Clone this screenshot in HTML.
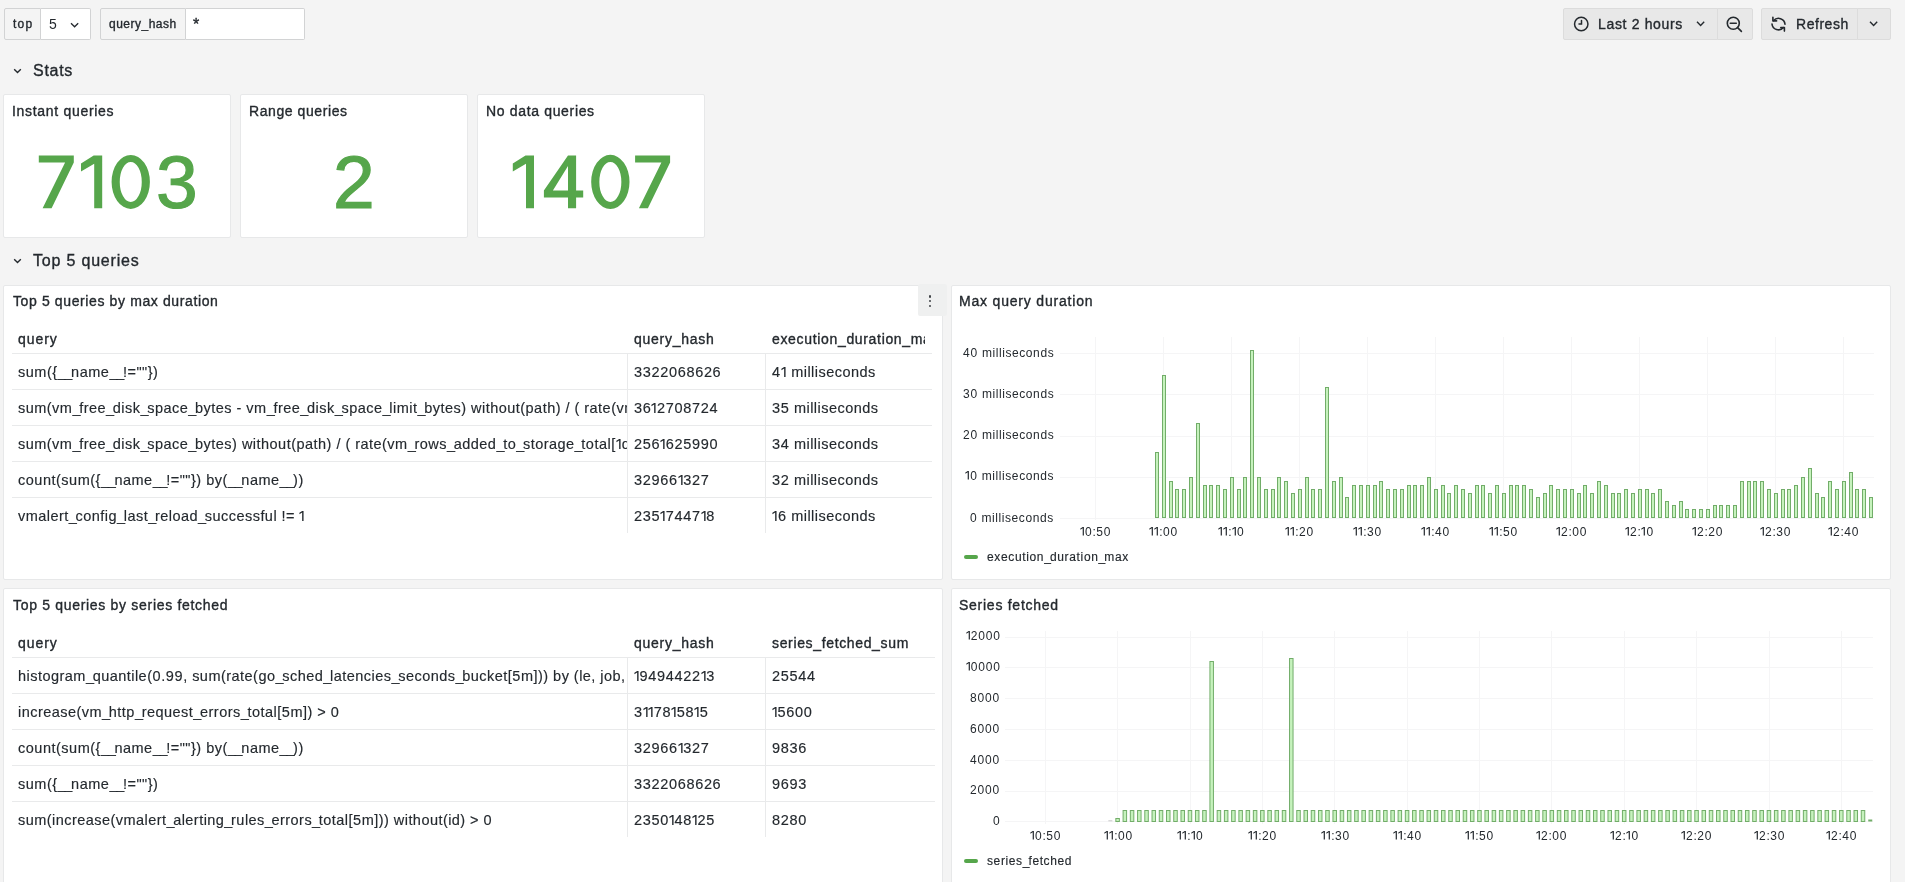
<!DOCTYPE html>
<html><head><meta charset="utf-8"><style>
html,body{margin:0;padding:0;}
body{width:1905px;height:882px;overflow:hidden;background:#f4f4f4;position:relative;font-family:"Liberation Sans",sans-serif;}
.t{position:absolute;white-space:nowrap;line-height:1;will-change:transform;}
.m{-webkit-text-stroke:0.35px currentColor;}
.r{-webkit-text-stroke:0.15px currentColor;}
.big{-webkit-text-stroke:1.2px currentColor;}
</style></head><body>
<div style="position:absolute;left:4px;top:8px;width:37px;height:32px;background:#f4f4f4;border:1px solid #d2d3d4;border-radius:2px 0 0 2px;box-sizing:border-box;"></div>
<div style="position:absolute;left:41px;top:8px;width:50px;height:32px;background:#fff;border:1px solid #d2d3d4;border-left:none;border-radius:0 2px 2px 0;box-sizing:border-box;"></div>
<div class="t m" style="left:12.70px;top:18.04px;font-size:12px;letter-spacing:1.259px;color:#24292e;">top</div>
<div class="t " style="left:49.20px;top:17.35px;font-size:14px;letter-spacing:0.000px;color:#24292e;">5</div>
<svg style="position:absolute;left:70px;top:22px" width="10" height="7"><path d="M1 1.2 L4.6 4.8 L8.2 1.2" fill="none" stroke="#24292e" stroke-width="1.3"/></svg>
<div style="position:absolute;left:100px;top:8px;width:86px;height:32px;background:#f4f4f4;border:1px solid #d2d3d4;border-radius:2px 0 0 2px;box-sizing:border-box;"></div>
<div style="position:absolute;left:186px;top:8px;width:119px;height:32px;background:#fff;border:1px solid #d2d3d4;border-left:none;border-radius:0 2px 2px 0;box-sizing:border-box;"></div>
<div class="t m" style="left:108.80px;top:17.54px;font-size:12px;letter-spacing:0.498px;color:#24292e;">query_hash</div>
<div class="t m" style="left:193.20px;top:17.06px;font-size:16px;letter-spacing:0.000px;color:#24292e;">*</div>
<div style="position:absolute;left:1563px;top:8px;width:155px;height:32px;background:#e8e8e8;border:1px solid #dcdcdc;box-sizing:border-box;border-radius:2px 0 0 2px;"></div>
<div style="position:absolute;left:1717px;top:8px;width:36px;height:32px;background:#e8e8e8;border:1px solid #dcdcdc;box-sizing:border-box;border-radius:0 2px 2px 0;"></div>
<div style="position:absolute;left:1761px;top:8px;width:97px;height:32px;background:#e8e8e8;border:1px solid #dcdcdc;box-sizing:border-box;border-radius:2px 0 0 2px;"></div>
<div style="position:absolute;left:1857px;top:8px;width:34px;height:32px;background:#e8e8e8;border:1px solid #dcdcdc;box-sizing:border-box;border-radius:0 2px 2px 0;"></div>
<svg style="position:absolute;left:1572px;top:15px" width="18" height="18" viewBox="0 0 18 18"><circle cx="9.25" cy="9" r="6.7" fill="none" stroke="#24292e" stroke-width="1.5"/><path d="M9.5 5.6 V9 H7" fill="none" stroke="#24292e" stroke-width="1.5" stroke-linecap="round"/></svg>
<div class="t m" style="left:1598.05px;top:17.15px;font-size:14px;letter-spacing:0.659px;color:#24292e;">Last 2 hours</div>
<svg style="position:absolute;left:1696px;top:20px" width="10" height="8"><path d="M1 1.8 L4.6 5.4 L8.2 1.8" fill="none" stroke="#24292e" stroke-width="1.4"/></svg>
<svg style="position:absolute;left:1725px;top:15px" width="19" height="19" viewBox="0 0 19 19"><circle cx="8.3" cy="8.3" r="6" fill="none" stroke="#24292e" stroke-width="1.6"/><path d="M5.3 8.3 H11.3 M12.6 12.6 L16.4 16.4" fill="none" stroke="#24292e" stroke-width="1.6" stroke-linecap="round"/></svg>
<svg style="position:absolute;left:1770px;top:15px" width="18" height="18" viewBox="0 0 18 18"><g fill="none" stroke="#24292e" stroke-width="1.6" stroke-linecap="round" stroke-linejoin="round"><path d="M3.6 5.6 A6.5 6.5 0 0 1 15 9.3"/><path d="M2.9 2.2 V5.9 H6.6"/><path d="M2 9 A6.5 6.5 0 0 0 13.4 12.6"/><path d="M10.8 12.6 H14.4 V16.1"/></g></svg>
<div class="t m" style="left:1796.10px;top:17.15px;font-size:14px;letter-spacing:0.530px;color:#24292e;">Refresh</div>
<svg style="position:absolute;left:1869px;top:20px" width="10" height="8"><path d="M1 1.8 L4.6 5.4 L8.2 1.8" fill="none" stroke="#24292e" stroke-width="1.4"/></svg>
<svg style="position:absolute;left:13px;top:68px" width="10" height="7"><path d="M1.2 1.2 L4.5 4.5 L7.8 1.2" fill="none" stroke="#24292e" stroke-width="1.4"/></svg>
<div class="t m" style="left:32.90px;top:63.26px;font-size:16px;letter-spacing:0.710px;color:#24292e;">Stats</div>
<div style="position:absolute;left:3px;top:94px;width:228px;height:144px;background:#fff;border:1px solid #e7e8e9;border-radius:2px;box-sizing:border-box;"></div>
<div class="t m" style="left:12.00px;top:104.25px;font-size:14px;letter-spacing:0.697px;color:#24292e;">Instant queries</div>
<div style="position:absolute;left:240px;top:94px;width:228px;height:144px;background:#fff;border:1px solid #e7e8e9;border-radius:2px;box-sizing:border-box;"></div>
<div class="t m" style="left:249.00px;top:104.25px;font-size:14px;letter-spacing:0.578px;color:#24292e;">Range queries</div>
<div style="position:absolute;left:477px;top:94px;width:228px;height:144px;background:#fff;border:1px solid #e7e8e9;border-radius:2px;box-sizing:border-box;"></div>
<div class="t m" style="left:486.00px;top:104.25px;font-size:14px;letter-spacing:0.661px;color:#24292e;">No data queries</div>
<svg style="position:absolute;left:0;top:0" width="720" height="240"><path fill-rule="evenodd" fill="#56a64b" d="M38.80 155.60 L73.80 155.60 L73.80 162.40 L51.60 208.20 L42.60 208.20 L65.10 162.40 L38.80 162.40 Z M81.00 163.60 L93.70 155.60 L102.20 155.60 L102.20 208.20 L94.20 208.20 L94.20 163.80 L81.00 171.60 Z M111.60 181.90 A19.15 27.0 0 1 0 149.90 181.90 A19.15 27.0 0 1 0 111.60 181.90 Z M119.75 181.90 A11.0 20.0 0 1 0 141.75 181.90 A11.0 20.0 0 1 0 119.75 181.90 Z M512.80 163.60 L525.50 155.60 L534.00 155.60 L534.00 208.20 L526.00 208.20 L526.00 163.80 L512.80 171.60 Z M568.00 155.60 L576.10 155.60 L576.10 190.50 L583.20 190.50 L583.20 197.60 L576.10 197.60 L576.10 208.20 L568.00 208.20 L568.00 197.60 L543.90 197.60 L543.90 190.50 Z M568.00 166.00 L552.90 190.50 L568.00 190.50 Z M591.20 181.90 A19.15 27.0 0 1 0 629.50 181.90 A19.15 27.0 0 1 0 591.20 181.90 Z M599.35 181.90 A11.0 20.0 0 1 0 621.35 181.90 A11.0 20.0 0 1 0 599.35 181.90 Z M635.10 155.60 L670.10 155.60 L670.10 162.40 L647.90 208.20 L638.90 208.20 L661.40 162.40 L635.10 162.40 Z"/></svg>
<div class="t big" style="left:155.85px;top:144.91px;font-size:75px;letter-spacing:0.000px;color:#56a64b;">3</div>
<div class="t big" style="left:332.65px;top:144.91px;font-size:75px;letter-spacing:0.000px;color:#56a64b;">2</div>
<svg style="position:absolute;left:13px;top:258px" width="10" height="7"><path d="M1.2 1.2 L4.5 4.5 L7.8 1.2" fill="none" stroke="#24292e" stroke-width="1.4"/></svg>
<div class="t m" style="left:32.90px;top:253.16px;font-size:16px;letter-spacing:0.811px;color:#24292e;">Top 5 queries</div>
<div style="position:absolute;left:3px;top:285px;width:940px;height:295px;background:#fff;border:1px solid #e7e8e9;border-radius:2px;box-sizing:border-box;"></div>
<div class="t m" style="left:12.90px;top:294.15px;font-size:14px;letter-spacing:0.619px;color:#24292e;">Top 5 queries by max duration</div>
<div style="position:absolute;left:16.4px;top:324px;width:610.6px;height:26px;overflow:hidden">
<div class="t m" style="left:1.30px;top:8.15px;font-size:14px;letter-spacing:0.963px;color:#24292e;">query</div>
</div>
<div style="position:absolute;left:632.6px;top:324px;width:132.39999999999998px;height:26px;overflow:hidden">
<div class="t m" style="left:1.30px;top:8.15px;font-size:14px;letter-spacing:0.740px;color:#24292e;">query_hash</div>
</div>
<div style="position:absolute;left:770.3px;top:324px;width:154.70000000000005px;height:26px;overflow:hidden">
<div class="t m" style="left:1.30px;top:8.15px;font-size:14px;letter-spacing:0.667px;color:#24292e;">execution_duration_max</div>
</div>
<div style="position:absolute;left:12px;top:353px;width:920px;height:1px;background:#e9eaeb;"></div>
<div style="position:absolute;left:12px;top:389px;width:920px;height:1px;background:#e9eaeb;"></div>
<div style="position:absolute;left:12px;top:425px;width:920px;height:1px;background:#e9eaeb;"></div>
<div style="position:absolute;left:12px;top:461px;width:920px;height:1px;background:#e9eaeb;"></div>
<div style="position:absolute;left:12px;top:497px;width:920px;height:1px;background:#e9eaeb;"></div>
<div style="position:absolute;left:627px;top:353px;width:1px;height:180px;background:#e9eaeb;"></div>
<div style="position:absolute;left:765px;top:353px;width:1px;height:180px;background:#e9eaeb;"></div>
<div style="position:absolute;left:16.4px;top:357.6px;width:610.6px;height:26px;overflow:hidden">
<div class="t r" style="left:1.27px;top:7.73px;font-size:14.5px;letter-spacing:0.508px;color:#24292e;">sum({<span style="letter-spacing:-1.32px">_</span><span style="letter-spacing:-1.32px">_</span>name<span style="letter-spacing:-1.32px">_</span><span style="letter-spacing:-1.32px">_</span>!=""})</div>
</div>
<div style="position:absolute;left:632.6px;top:357.6px;width:132.39999999999998px;height:26px;overflow:hidden">
<div class="t r" style="left:1.27px;top:7.73px;font-size:14.5px;letter-spacing:0.000px;color:#24292e;"><span style="letter-spacing:0.66px">3</span><span style="letter-spacing:0.66px">3</span><span style="letter-spacing:0.66px">2</span><span style="letter-spacing:0.66px">2</span><span style="letter-spacing:0.66px">0</span><span style="letter-spacing:0.66px">6</span><span style="letter-spacing:0.66px">8</span><span style="letter-spacing:0.66px">6</span><span style="letter-spacing:0.66px">2</span><span style="letter-spacing:0.66px">6</span></div>
</div>
<div style="position:absolute;left:770.3px;top:357.6px;width:154.70000000000005px;height:26px;overflow:hidden">
<div class="t r" style="left:1.27px;top:7.73px;font-size:14.5px;letter-spacing:0.460px;color:#24292e;"><span style="letter-spacing:0.66px">4</span><svg width="5.56" height="10.38" style="margin-right:0.46px"><path fill="currentColor" d="M3.15 0H4.55V10.38H3.15V1.40L0.42 3.15V1.82Z"/></svg> milliseconds</div>
</div>
<div style="position:absolute;left:16.4px;top:393.6px;width:610.6px;height:26px;overflow:hidden">
<div class="t r" style="left:1.27px;top:7.73px;font-size:14.5px;letter-spacing:0.473px;color:#24292e;">sum(vm<span style="letter-spacing:-1.32px">_</span>free<span style="letter-spacing:-1.32px">_</span>disk<span style="letter-spacing:-1.32px">_</span>space<span style="letter-spacing:-1.32px">_</span>bytes - vm<span style="letter-spacing:-1.32px">_</span>free<span style="letter-spacing:-1.32px">_</span>disk<span style="letter-spacing:-1.32px">_</span>space<span style="letter-spacing:-1.32px">_</span>limit<span style="letter-spacing:-1.32px">_</span>bytes) without(path) / ( rate(vm<span style="letter-spacing:-1.32px">_</span>rows<span style="letter-spacing:-1.32px">_</span>added<span style="letter-spacing:-1.32px">_</span>to<span style="letter-spacing:-1.32px">_</span>storage<span style="letter-spacing:-1.32px">_</span>total[<svg width="5.56" height="10.38" style="margin-right:0.47px"><path fill="currentColor" d="M3.15 0H4.55V10.38H3.15V1.40L0.42 3.15V1.82Z"/></svg>d]) )</div>
</div>
<div style="position:absolute;left:632.6px;top:393.6px;width:132.39999999999998px;height:26px;overflow:hidden">
<div class="t r" style="left:1.27px;top:7.73px;font-size:14.5px;letter-spacing:0.000px;color:#24292e;"><span style="letter-spacing:0.66px">3</span><span style="letter-spacing:0.66px">6</span><svg width="5.56" height="10.38" style="margin-right:0.00px"><path fill="currentColor" d="M3.15 0H4.55V10.38H3.15V1.40L0.42 3.15V1.82Z"/></svg><span style="letter-spacing:0.66px">2</span><span style="letter-spacing:0.66px">7</span><span style="letter-spacing:0.66px">0</span><span style="letter-spacing:0.66px">8</span><span style="letter-spacing:0.66px">7</span><span style="letter-spacing:0.66px">2</span><span style="letter-spacing:0.66px">4</span></div>
</div>
<div style="position:absolute;left:770.3px;top:393.6px;width:154.70000000000005px;height:26px;overflow:hidden">
<div class="t r" style="left:1.27px;top:7.73px;font-size:14.5px;letter-spacing:0.460px;color:#24292e;"><span style="letter-spacing:0.66px">3</span><span style="letter-spacing:0.66px">5</span> milliseconds</div>
</div>
<div style="position:absolute;left:16.4px;top:429.6px;width:610.6px;height:26px;overflow:hidden">
<div class="t r" style="left:1.27px;top:7.73px;font-size:14.5px;letter-spacing:0.474px;color:#24292e;">sum(vm<span style="letter-spacing:-1.32px">_</span>free<span style="letter-spacing:-1.32px">_</span>disk<span style="letter-spacing:-1.32px">_</span>space<span style="letter-spacing:-1.32px">_</span>bytes) without(path) / ( rate(vm<span style="letter-spacing:-1.32px">_</span>rows<span style="letter-spacing:-1.32px">_</span>added<span style="letter-spacing:-1.32px">_</span>to<span style="letter-spacing:-1.32px">_</span>storage<span style="letter-spacing:-1.32px">_</span>total[<svg width="5.56" height="10.38" style="margin-right:0.47px"><path fill="currentColor" d="M3.15 0H4.55V10.38H3.15V1.40L0.42 3.15V1.82Z"/></svg>d]) )</div>
</div>
<div style="position:absolute;left:632.6px;top:429.6px;width:132.39999999999998px;height:26px;overflow:hidden">
<div class="t r" style="left:1.27px;top:7.73px;font-size:14.5px;letter-spacing:0.000px;color:#24292e;"><span style="letter-spacing:0.66px">2</span><span style="letter-spacing:0.66px">5</span><span style="letter-spacing:0.66px">6</span><svg width="5.56" height="10.38" style="margin-right:0.00px"><path fill="currentColor" d="M3.15 0H4.55V10.38H3.15V1.40L0.42 3.15V1.82Z"/></svg><span style="letter-spacing:0.66px">6</span><span style="letter-spacing:0.66px">2</span><span style="letter-spacing:0.66px">5</span><span style="letter-spacing:0.66px">9</span><span style="letter-spacing:0.66px">9</span><span style="letter-spacing:0.66px">0</span></div>
</div>
<div style="position:absolute;left:770.3px;top:429.6px;width:154.70000000000005px;height:26px;overflow:hidden">
<div class="t r" style="left:1.27px;top:7.73px;font-size:14.5px;letter-spacing:0.460px;color:#24292e;"><span style="letter-spacing:0.66px">3</span><span style="letter-spacing:0.66px">4</span> milliseconds</div>
</div>
<div style="position:absolute;left:16.4px;top:465.6px;width:610.6px;height:26px;overflow:hidden">
<div class="t r" style="left:1.27px;top:7.73px;font-size:14.5px;letter-spacing:0.502px;color:#24292e;">count(sum({<span style="letter-spacing:-1.32px">_</span><span style="letter-spacing:-1.32px">_</span>name<span style="letter-spacing:-1.32px">_</span><span style="letter-spacing:-1.32px">_</span>!=""}) by(<span style="letter-spacing:-1.32px">_</span><span style="letter-spacing:-1.32px">_</span>name<span style="letter-spacing:-1.32px">_</span><span style="letter-spacing:-1.32px">_</span>))</div>
</div>
<div style="position:absolute;left:632.6px;top:465.6px;width:132.39999999999998px;height:26px;overflow:hidden">
<div class="t r" style="left:1.27px;top:7.73px;font-size:14.5px;letter-spacing:0.000px;color:#24292e;"><span style="letter-spacing:0.66px">3</span><span style="letter-spacing:0.66px">2</span><span style="letter-spacing:0.66px">9</span><span style="letter-spacing:0.66px">6</span><span style="letter-spacing:0.66px">6</span><svg width="5.56" height="10.38" style="margin-right:0.00px"><path fill="currentColor" d="M3.15 0H4.55V10.38H3.15V1.40L0.42 3.15V1.82Z"/></svg><span style="letter-spacing:0.66px">3</span><span style="letter-spacing:0.66px">2</span><span style="letter-spacing:0.66px">7</span></div>
</div>
<div style="position:absolute;left:770.3px;top:465.6px;width:154.70000000000005px;height:26px;overflow:hidden">
<div class="t r" style="left:1.27px;top:7.73px;font-size:14.5px;letter-spacing:0.460px;color:#24292e;"><span style="letter-spacing:0.66px">3</span><span style="letter-spacing:0.66px">2</span> milliseconds</div>
</div>
<div style="position:absolute;left:16.4px;top:501.6px;width:610.6px;height:26px;overflow:hidden">
<div class="t r" style="left:1.27px;top:7.73px;font-size:14.5px;letter-spacing:0.462px;color:#24292e;">vmalert<span style="letter-spacing:-1.32px">_</span>config<span style="letter-spacing:-1.32px">_</span>last<span style="letter-spacing:-1.32px">_</span>reload<span style="letter-spacing:-1.32px">_</span>successful != <svg width="5.56" height="10.38" style="margin-right:0.46px"><path fill="currentColor" d="M3.15 0H4.55V10.38H3.15V1.40L0.42 3.15V1.82Z"/></svg></div>
</div>
<div style="position:absolute;left:632.6px;top:501.6px;width:132.39999999999998px;height:26px;overflow:hidden">
<div class="t r" style="left:1.27px;top:7.73px;font-size:14.5px;letter-spacing:0.000px;color:#24292e;"><span style="letter-spacing:0.66px">2</span><span style="letter-spacing:0.66px">3</span><span style="letter-spacing:0.66px">5</span><svg width="5.56" height="10.38" style="margin-right:0.00px"><path fill="currentColor" d="M3.15 0H4.55V10.38H3.15V1.40L0.42 3.15V1.82Z"/></svg><span style="letter-spacing:0.66px">7</span><span style="letter-spacing:0.66px">4</span><span style="letter-spacing:0.66px">4</span><span style="letter-spacing:0.66px">7</span><svg width="5.56" height="10.38" style="margin-right:0.00px"><path fill="currentColor" d="M3.15 0H4.55V10.38H3.15V1.40L0.42 3.15V1.82Z"/></svg><span style="letter-spacing:0.66px">8</span></div>
</div>
<div style="position:absolute;left:770.3px;top:501.6px;width:154.70000000000005px;height:26px;overflow:hidden">
<div class="t r" style="left:1.27px;top:7.73px;font-size:14.5px;letter-spacing:0.460px;color:#24292e;"><svg width="5.56" height="10.38" style="margin-right:0.46px"><path fill="currentColor" d="M3.15 0H4.55V10.38H3.15V1.40L0.42 3.15V1.82Z"/></svg><span style="letter-spacing:0.66px">6</span> milliseconds</div>
</div>
<div style="position:absolute;left:3px;top:588px;width:940px;height:401px;background:#fff;border:1px solid #e7e8e9;border-radius:2px;box-sizing:border-box;"></div>
<div class="t m" style="left:12.90px;top:598.15px;font-size:14px;letter-spacing:0.691px;color:#24292e;">Top 5 queries by series fetched</div>
<div style="position:absolute;left:16.4px;top:628px;width:610.6px;height:26px;overflow:hidden">
<div class="t m" style="left:1.30px;top:8.15px;font-size:14px;letter-spacing:0.963px;color:#24292e;">query</div>
</div>
<div style="position:absolute;left:632.6px;top:628px;width:132.39999999999998px;height:26px;overflow:hidden">
<div class="t m" style="left:1.30px;top:8.15px;font-size:14px;letter-spacing:0.740px;color:#24292e;">query_hash</div>
</div>
<div style="position:absolute;left:770.3px;top:628px;width:161.70000000000005px;height:26px;overflow:hidden">
<div class="t m" style="left:1.30px;top:8.15px;font-size:14px;letter-spacing:0.647px;color:#24292e;">series_fetched_sum</div>
</div>
<div style="position:absolute;left:12px;top:657px;width:923px;height:1px;background:#e9eaeb;"></div>
<div style="position:absolute;left:12px;top:693px;width:923px;height:1px;background:#e9eaeb;"></div>
<div style="position:absolute;left:12px;top:729px;width:923px;height:1px;background:#e9eaeb;"></div>
<div style="position:absolute;left:12px;top:765px;width:923px;height:1px;background:#e9eaeb;"></div>
<div style="position:absolute;left:12px;top:801px;width:923px;height:1px;background:#e9eaeb;"></div>
<div style="position:absolute;left:627px;top:657px;width:1px;height:180px;background:#e9eaeb;"></div>
<div style="position:absolute;left:765px;top:657px;width:1px;height:180px;background:#e9eaeb;"></div>
<div style="position:absolute;left:16.4px;top:661.6px;width:610.6px;height:26px;overflow:hidden">
<div class="t r" style="left:1.27px;top:7.73px;font-size:14.5px;letter-spacing:0.467px;color:#24292e;">histogram<span style="letter-spacing:-1.32px">_</span>quantile(<span style="letter-spacing:0.66px">0</span>.<span style="letter-spacing:0.66px">9</span><span style="letter-spacing:0.66px">9</span>, sum(rate(go<span style="letter-spacing:-1.32px">_</span>sched<span style="letter-spacing:-1.32px">_</span>latencies<span style="letter-spacing:-1.32px">_</span>seconds<span style="letter-spacing:-1.32px">_</span>bucket[<span style="letter-spacing:0.66px">5</span>m])) by (le, job, instance))</div>
</div>
<div style="position:absolute;left:632.6px;top:661.6px;width:132.39999999999998px;height:26px;overflow:hidden">
<div class="t r" style="left:1.27px;top:7.73px;font-size:14.5px;letter-spacing:0.000px;color:#24292e;"><svg width="5.56" height="10.38" style="margin-right:0.00px"><path fill="currentColor" d="M3.15 0H4.55V10.38H3.15V1.40L0.42 3.15V1.82Z"/></svg><span style="letter-spacing:0.66px">9</span><span style="letter-spacing:0.66px">4</span><span style="letter-spacing:0.66px">9</span><span style="letter-spacing:0.66px">4</span><span style="letter-spacing:0.66px">4</span><span style="letter-spacing:0.66px">2</span><span style="letter-spacing:0.66px">2</span><svg width="5.56" height="10.38" style="margin-right:0.00px"><path fill="currentColor" d="M3.15 0H4.55V10.38H3.15V1.40L0.42 3.15V1.82Z"/></svg><span style="letter-spacing:0.66px">3</span></div>
</div>
<div style="position:absolute;left:770.3px;top:661.6px;width:161.70000000000005px;height:26px;overflow:hidden">
<div class="t r" style="left:1.27px;top:7.73px;font-size:14.5px;letter-spacing:0.000px;color:#24292e;"><span style="letter-spacing:0.66px">2</span><span style="letter-spacing:0.66px">5</span><span style="letter-spacing:0.66px">5</span><span style="letter-spacing:0.66px">4</span><span style="letter-spacing:0.66px">4</span></div>
</div>
<div style="position:absolute;left:16.4px;top:697.6px;width:610.6px;height:26px;overflow:hidden">
<div class="t r" style="left:1.27px;top:7.73px;font-size:14.5px;letter-spacing:0.465px;color:#24292e;">increase(vm<span style="letter-spacing:-1.32px">_</span>http<span style="letter-spacing:-1.32px">_</span>request<span style="letter-spacing:-1.32px">_</span>errors<span style="letter-spacing:-1.32px">_</span>total[<span style="letter-spacing:0.66px">5</span>m]) &gt; <span style="letter-spacing:0.66px">0</span></div>
</div>
<div style="position:absolute;left:632.6px;top:697.6px;width:132.39999999999998px;height:26px;overflow:hidden">
<div class="t r" style="left:1.27px;top:7.73px;font-size:14.5px;letter-spacing:0.000px;color:#24292e;"><span style="letter-spacing:0.66px">3</span><svg width="5.56" height="10.38" style="margin-right:0.00px"><path fill="currentColor" d="M3.15 0H4.55V10.38H3.15V1.40L0.42 3.15V1.82Z"/></svg><svg width="5.56" height="10.38" style="margin-right:0.00px"><path fill="currentColor" d="M3.15 0H4.55V10.38H3.15V1.40L0.42 3.15V1.82Z"/></svg><span style="letter-spacing:0.66px">7</span><span style="letter-spacing:0.66px">8</span><svg width="5.56" height="10.38" style="margin-right:0.00px"><path fill="currentColor" d="M3.15 0H4.55V10.38H3.15V1.40L0.42 3.15V1.82Z"/></svg><span style="letter-spacing:0.66px">5</span><span style="letter-spacing:0.66px">8</span><svg width="5.56" height="10.38" style="margin-right:0.00px"><path fill="currentColor" d="M3.15 0H4.55V10.38H3.15V1.40L0.42 3.15V1.82Z"/></svg><span style="letter-spacing:0.66px">5</span></div>
</div>
<div style="position:absolute;left:770.3px;top:697.6px;width:161.70000000000005px;height:26px;overflow:hidden">
<div class="t r" style="left:1.27px;top:7.73px;font-size:14.5px;letter-spacing:0.000px;color:#24292e;"><svg width="5.56" height="10.38" style="margin-right:0.00px"><path fill="currentColor" d="M3.15 0H4.55V10.38H3.15V1.40L0.42 3.15V1.82Z"/></svg><span style="letter-spacing:0.66px">5</span><span style="letter-spacing:0.66px">6</span><span style="letter-spacing:0.66px">0</span><span style="letter-spacing:0.66px">0</span></div>
</div>
<div style="position:absolute;left:16.4px;top:733.6px;width:610.6px;height:26px;overflow:hidden">
<div class="t r" style="left:1.27px;top:7.73px;font-size:14.5px;letter-spacing:0.502px;color:#24292e;">count(sum({<span style="letter-spacing:-1.32px">_</span><span style="letter-spacing:-1.32px">_</span>name<span style="letter-spacing:-1.32px">_</span><span style="letter-spacing:-1.32px">_</span>!=""}) by(<span style="letter-spacing:-1.32px">_</span><span style="letter-spacing:-1.32px">_</span>name<span style="letter-spacing:-1.32px">_</span><span style="letter-spacing:-1.32px">_</span>))</div>
</div>
<div style="position:absolute;left:632.6px;top:733.6px;width:132.39999999999998px;height:26px;overflow:hidden">
<div class="t r" style="left:1.27px;top:7.73px;font-size:14.5px;letter-spacing:0.000px;color:#24292e;"><span style="letter-spacing:0.66px">3</span><span style="letter-spacing:0.66px">2</span><span style="letter-spacing:0.66px">9</span><span style="letter-spacing:0.66px">6</span><span style="letter-spacing:0.66px">6</span><svg width="5.56" height="10.38" style="margin-right:0.00px"><path fill="currentColor" d="M3.15 0H4.55V10.38H3.15V1.40L0.42 3.15V1.82Z"/></svg><span style="letter-spacing:0.66px">3</span><span style="letter-spacing:0.66px">2</span><span style="letter-spacing:0.66px">7</span></div>
</div>
<div style="position:absolute;left:770.3px;top:733.6px;width:161.70000000000005px;height:26px;overflow:hidden">
<div class="t r" style="left:1.27px;top:7.73px;font-size:14.5px;letter-spacing:0.000px;color:#24292e;"><span style="letter-spacing:0.66px">9</span><span style="letter-spacing:0.66px">8</span><span style="letter-spacing:0.66px">3</span><span style="letter-spacing:0.66px">6</span></div>
</div>
<div style="position:absolute;left:16.4px;top:769.6px;width:610.6px;height:26px;overflow:hidden">
<div class="t r" style="left:1.27px;top:7.73px;font-size:14.5px;letter-spacing:0.508px;color:#24292e;">sum({<span style="letter-spacing:-1.32px">_</span><span style="letter-spacing:-1.32px">_</span>name<span style="letter-spacing:-1.32px">_</span><span style="letter-spacing:-1.32px">_</span>!=""})</div>
</div>
<div style="position:absolute;left:632.6px;top:769.6px;width:132.39999999999998px;height:26px;overflow:hidden">
<div class="t r" style="left:1.27px;top:7.73px;font-size:14.5px;letter-spacing:0.000px;color:#24292e;"><span style="letter-spacing:0.66px">3</span><span style="letter-spacing:0.66px">3</span><span style="letter-spacing:0.66px">2</span><span style="letter-spacing:0.66px">2</span><span style="letter-spacing:0.66px">0</span><span style="letter-spacing:0.66px">6</span><span style="letter-spacing:0.66px">8</span><span style="letter-spacing:0.66px">6</span><span style="letter-spacing:0.66px">2</span><span style="letter-spacing:0.66px">6</span></div>
</div>
<div style="position:absolute;left:770.3px;top:769.6px;width:161.70000000000005px;height:26px;overflow:hidden">
<div class="t r" style="left:1.27px;top:7.73px;font-size:14.5px;letter-spacing:0.000px;color:#24292e;"><span style="letter-spacing:0.66px">9</span><span style="letter-spacing:0.66px">6</span><span style="letter-spacing:0.66px">9</span><span style="letter-spacing:0.66px">3</span></div>
</div>
<div style="position:absolute;left:16.4px;top:805.6px;width:610.6px;height:26px;overflow:hidden">
<div class="t r" style="left:1.27px;top:7.73px;font-size:14.5px;letter-spacing:0.451px;color:#24292e;">sum(increase(vmalert<span style="letter-spacing:-1.32px">_</span>alerting<span style="letter-spacing:-1.32px">_</span>rules<span style="letter-spacing:-1.32px">_</span>errors<span style="letter-spacing:-1.32px">_</span>total[<span style="letter-spacing:0.66px">5</span>m])) without(id) &gt; <span style="letter-spacing:0.66px">0</span></div>
</div>
<div style="position:absolute;left:632.6px;top:805.6px;width:132.39999999999998px;height:26px;overflow:hidden">
<div class="t r" style="left:1.27px;top:7.73px;font-size:14.5px;letter-spacing:0.000px;color:#24292e;"><span style="letter-spacing:0.66px">2</span><span style="letter-spacing:0.66px">3</span><span style="letter-spacing:0.66px">5</span><span style="letter-spacing:0.66px">0</span><svg width="5.56" height="10.38" style="margin-right:0.00px"><path fill="currentColor" d="M3.15 0H4.55V10.38H3.15V1.40L0.42 3.15V1.82Z"/></svg><span style="letter-spacing:0.66px">4</span><span style="letter-spacing:0.66px">8</span><svg width="5.56" height="10.38" style="margin-right:0.00px"><path fill="currentColor" d="M3.15 0H4.55V10.38H3.15V1.40L0.42 3.15V1.82Z"/></svg><span style="letter-spacing:0.66px">2</span><span style="letter-spacing:0.66px">5</span></div>
</div>
<div style="position:absolute;left:770.3px;top:805.6px;width:161.70000000000005px;height:26px;overflow:hidden">
<div class="t r" style="left:1.27px;top:7.73px;font-size:14.5px;letter-spacing:0.000px;color:#24292e;"><span style="letter-spacing:0.66px">8</span><span style="letter-spacing:0.66px">2</span><span style="letter-spacing:0.66px">8</span><span style="letter-spacing:0.66px">0</span></div>
</div>
<div style="position:absolute;left:918px;top:284px;width:29px;height:32px;background:#eff0f0;border-radius:2px;"></div>
<div style="position:absolute;left:928.6px;top:295.0px;width:2.6px;height:2.6px;background:#404448;border-radius:50%;"></div>
<div style="position:absolute;left:928.6px;top:299.7px;width:2.6px;height:2.6px;background:#404448;border-radius:50%;"></div>
<div style="position:absolute;left:928.6px;top:304.5px;width:2.6px;height:2.6px;background:#404448;border-radius:50%;"></div>
<div style="position:absolute;left:951px;top:285px;width:940px;height:295px;background:#fff;border:1px solid #e7e8e9;border-radius:2px;box-sizing:border-box;"></div>
<div class="t m" style="left:959.30px;top:294.15px;font-size:14px;letter-spacing:0.809px;color:#24292e;">Max query duration</div>
<svg style="position:absolute;left:0;top:0" width="1905" height="882"><line x1="1060" y1="353.5" x2="1874" y2="353.5" stroke="#f5f5f6" stroke-width="1"/><line x1="1060" y1="394.5" x2="1874" y2="394.5" stroke="#f5f5f6" stroke-width="1"/><line x1="1060" y1="436.5" x2="1874" y2="436.5" stroke="#f5f5f6" stroke-width="1"/><line x1="1060" y1="477.5" x2="1874" y2="477.5" stroke="#f5f5f6" stroke-width="1"/><line x1="1060" y1="518.5" x2="1874" y2="518.5" stroke="#f5f5f6" stroke-width="1"/><line x1="1095.5" y1="337" x2="1095.5" y2="520" stroke="#f5f5f6" stroke-width="1"/><line x1="1163.5" y1="337" x2="1163.5" y2="520" stroke="#f5f5f6" stroke-width="1"/><line x1="1231.5" y1="337" x2="1231.5" y2="520" stroke="#f5f5f6" stroke-width="1"/><line x1="1299.5" y1="337" x2="1299.5" y2="520" stroke="#f5f5f6" stroke-width="1"/><line x1="1367.5" y1="337" x2="1367.5" y2="520" stroke="#f5f5f6" stroke-width="1"/><line x1="1435.5" y1="337" x2="1435.5" y2="520" stroke="#f5f5f6" stroke-width="1"/><line x1="1503.5" y1="337" x2="1503.5" y2="520" stroke="#f5f5f6" stroke-width="1"/><line x1="1571.5" y1="337" x2="1571.5" y2="520" stroke="#f5f5f6" stroke-width="1"/><line x1="1639.5" y1="337" x2="1639.5" y2="520" stroke="#f5f5f6" stroke-width="1"/><line x1="1707.5" y1="337" x2="1707.5" y2="520" stroke="#f5f5f6" stroke-width="1"/><line x1="1775.5" y1="337" x2="1775.5" y2="520" stroke="#f5f5f6" stroke-width="1"/><line x1="1843.5" y1="337" x2="1843.5" y2="520" stroke="#f5f5f6" stroke-width="1"/><rect x="1155.50" y="452.50" width="3.00" height="65.00" fill="#c6f2bd" stroke="#72ad69" stroke-width="1"/><rect x="1162.50" y="375.50" width="3.00" height="142.00" fill="#c6f2bd" stroke="#72ad69" stroke-width="1"/><rect x="1169.50" y="481.50" width="3.00" height="36.00" fill="#c6f2bd" stroke="#72ad69" stroke-width="1"/><rect x="1175.50" y="489.50" width="3.00" height="28.00" fill="#c6f2bd" stroke="#72ad69" stroke-width="1"/><rect x="1182.50" y="489.50" width="3.00" height="28.00" fill="#c6f2bd" stroke="#72ad69" stroke-width="1"/><rect x="1189.50" y="477.50" width="3.00" height="40.00" fill="#c6f2bd" stroke="#72ad69" stroke-width="1"/><rect x="1196.50" y="423.50" width="3.00" height="94.00" fill="#c6f2bd" stroke="#72ad69" stroke-width="1"/><rect x="1203.50" y="485.50" width="3.00" height="32.00" fill="#c6f2bd" stroke="#72ad69" stroke-width="1"/><rect x="1209.50" y="485.50" width="3.00" height="32.00" fill="#c6f2bd" stroke="#72ad69" stroke-width="1"/><rect x="1216.50" y="485.50" width="3.00" height="32.00" fill="#c6f2bd" stroke="#72ad69" stroke-width="1"/><rect x="1223.50" y="489.50" width="3.00" height="28.00" fill="#c6f2bd" stroke="#72ad69" stroke-width="1"/><rect x="1230.50" y="477.50" width="3.00" height="40.00" fill="#c6f2bd" stroke="#72ad69" stroke-width="1"/><rect x="1237.50" y="489.50" width="3.00" height="28.00" fill="#c6f2bd" stroke="#72ad69" stroke-width="1"/><rect x="1243.50" y="477.50" width="3.00" height="40.00" fill="#c6f2bd" stroke="#72ad69" stroke-width="1"/><rect x="1250.50" y="350.50" width="3.00" height="167.00" fill="#c6f2bd" stroke="#72ad69" stroke-width="1"/><rect x="1257.50" y="477.50" width="3.00" height="40.00" fill="#c6f2bd" stroke="#72ad69" stroke-width="1"/><rect x="1264.50" y="489.50" width="3.00" height="28.00" fill="#c6f2bd" stroke="#72ad69" stroke-width="1"/><rect x="1271.50" y="489.50" width="3.00" height="28.00" fill="#c6f2bd" stroke="#72ad69" stroke-width="1"/><rect x="1277.50" y="477.50" width="3.00" height="40.00" fill="#c6f2bd" stroke="#72ad69" stroke-width="1"/><rect x="1284.50" y="481.50" width="3.00" height="36.00" fill="#c6f2bd" stroke="#72ad69" stroke-width="1"/><rect x="1291.50" y="493.50" width="3.00" height="24.00" fill="#c6f2bd" stroke="#72ad69" stroke-width="1"/><rect x="1298.50" y="489.50" width="3.00" height="28.00" fill="#c6f2bd" stroke="#72ad69" stroke-width="1"/><rect x="1305.50" y="477.50" width="3.00" height="40.00" fill="#c6f2bd" stroke="#72ad69" stroke-width="1"/><rect x="1311.50" y="489.50" width="3.00" height="28.00" fill="#c6f2bd" stroke="#72ad69" stroke-width="1"/><rect x="1318.50" y="489.50" width="3.00" height="28.00" fill="#c6f2bd" stroke="#72ad69" stroke-width="1"/><rect x="1325.50" y="387.50" width="3.00" height="130.00" fill="#c6f2bd" stroke="#72ad69" stroke-width="1"/><rect x="1332.50" y="481.50" width="3.00" height="36.00" fill="#c6f2bd" stroke="#72ad69" stroke-width="1"/><rect x="1339.50" y="477.50" width="3.00" height="40.00" fill="#c6f2bd" stroke="#72ad69" stroke-width="1"/><rect x="1345.50" y="497.50" width="3.00" height="20.00" fill="#c6f2bd" stroke="#72ad69" stroke-width="1"/><rect x="1352.50" y="485.50" width="3.00" height="32.00" fill="#c6f2bd" stroke="#72ad69" stroke-width="1"/><rect x="1359.50" y="485.50" width="3.00" height="32.00" fill="#c6f2bd" stroke="#72ad69" stroke-width="1"/><rect x="1366.50" y="485.50" width="3.00" height="32.00" fill="#c6f2bd" stroke="#72ad69" stroke-width="1"/><rect x="1373.50" y="485.50" width="3.00" height="32.00" fill="#c6f2bd" stroke="#72ad69" stroke-width="1"/><rect x="1379.50" y="481.50" width="3.00" height="36.00" fill="#c6f2bd" stroke="#72ad69" stroke-width="1"/><rect x="1386.50" y="489.50" width="3.00" height="28.00" fill="#c6f2bd" stroke="#72ad69" stroke-width="1"/><rect x="1393.50" y="489.50" width="3.00" height="28.00" fill="#c6f2bd" stroke="#72ad69" stroke-width="1"/><rect x="1400.50" y="489.50" width="3.00" height="28.00" fill="#c6f2bd" stroke="#72ad69" stroke-width="1"/><rect x="1407.50" y="485.50" width="3.00" height="32.00" fill="#c6f2bd" stroke="#72ad69" stroke-width="1"/><rect x="1413.50" y="485.50" width="3.00" height="32.00" fill="#c6f2bd" stroke="#72ad69" stroke-width="1"/><rect x="1420.50" y="485.50" width="3.00" height="32.00" fill="#c6f2bd" stroke="#72ad69" stroke-width="1"/><rect x="1427.50" y="477.50" width="3.00" height="40.00" fill="#c6f2bd" stroke="#72ad69" stroke-width="1"/><rect x="1434.50" y="489.50" width="3.00" height="28.00" fill="#c6f2bd" stroke="#72ad69" stroke-width="1"/><rect x="1441.50" y="485.50" width="3.00" height="32.00" fill="#c6f2bd" stroke="#72ad69" stroke-width="1"/><rect x="1447.50" y="493.50" width="3.00" height="24.00" fill="#c6f2bd" stroke="#72ad69" stroke-width="1"/><rect x="1454.50" y="485.50" width="3.00" height="32.00" fill="#c6f2bd" stroke="#72ad69" stroke-width="1"/><rect x="1461.50" y="489.50" width="3.00" height="28.00" fill="#c6f2bd" stroke="#72ad69" stroke-width="1"/><rect x="1468.50" y="493.50" width="3.00" height="24.00" fill="#c6f2bd" stroke="#72ad69" stroke-width="1"/><rect x="1475.50" y="485.50" width="3.00" height="32.00" fill="#c6f2bd" stroke="#72ad69" stroke-width="1"/><rect x="1481.50" y="485.50" width="3.00" height="32.00" fill="#c6f2bd" stroke="#72ad69" stroke-width="1"/><rect x="1488.50" y="493.50" width="3.00" height="24.00" fill="#c6f2bd" stroke="#72ad69" stroke-width="1"/><rect x="1495.50" y="485.50" width="3.00" height="32.00" fill="#c6f2bd" stroke="#72ad69" stroke-width="1"/><rect x="1502.50" y="493.50" width="3.00" height="24.00" fill="#c6f2bd" stroke="#72ad69" stroke-width="1"/><rect x="1509.50" y="485.50" width="3.00" height="32.00" fill="#c6f2bd" stroke="#72ad69" stroke-width="1"/><rect x="1515.50" y="485.50" width="3.00" height="32.00" fill="#c6f2bd" stroke="#72ad69" stroke-width="1"/><rect x="1522.50" y="485.50" width="3.00" height="32.00" fill="#c6f2bd" stroke="#72ad69" stroke-width="1"/><rect x="1529.50" y="489.50" width="3.00" height="28.00" fill="#c6f2bd" stroke="#72ad69" stroke-width="1"/><rect x="1536.50" y="497.50" width="3.00" height="20.00" fill="#c6f2bd" stroke="#72ad69" stroke-width="1"/><rect x="1543.50" y="493.50" width="3.00" height="24.00" fill="#c6f2bd" stroke="#72ad69" stroke-width="1"/><rect x="1549.50" y="485.50" width="3.00" height="32.00" fill="#c6f2bd" stroke="#72ad69" stroke-width="1"/><rect x="1556.50" y="489.50" width="3.00" height="28.00" fill="#c6f2bd" stroke="#72ad69" stroke-width="1"/><rect x="1563.50" y="489.50" width="3.00" height="28.00" fill="#c6f2bd" stroke="#72ad69" stroke-width="1"/><rect x="1570.50" y="489.50" width="3.00" height="28.00" fill="#c6f2bd" stroke="#72ad69" stroke-width="1"/><rect x="1577.50" y="493.50" width="3.00" height="24.00" fill="#c6f2bd" stroke="#72ad69" stroke-width="1"/><rect x="1583.50" y="485.50" width="3.00" height="32.00" fill="#c6f2bd" stroke="#72ad69" stroke-width="1"/><rect x="1590.50" y="493.50" width="3.00" height="24.00" fill="#c6f2bd" stroke="#72ad69" stroke-width="1"/><rect x="1597.50" y="481.50" width="3.00" height="36.00" fill="#c6f2bd" stroke="#72ad69" stroke-width="1"/><rect x="1604.50" y="485.50" width="3.00" height="32.00" fill="#c6f2bd" stroke="#72ad69" stroke-width="1"/><rect x="1611.50" y="493.50" width="3.00" height="24.00" fill="#c6f2bd" stroke="#72ad69" stroke-width="1"/><rect x="1617.50" y="493.50" width="3.00" height="24.00" fill="#c6f2bd" stroke="#72ad69" stroke-width="1"/><rect x="1624.50" y="489.50" width="3.00" height="28.00" fill="#c6f2bd" stroke="#72ad69" stroke-width="1"/><rect x="1631.50" y="493.50" width="3.00" height="24.00" fill="#c6f2bd" stroke="#72ad69" stroke-width="1"/><rect x="1638.50" y="489.50" width="3.00" height="28.00" fill="#c6f2bd" stroke="#72ad69" stroke-width="1"/><rect x="1645.50" y="489.50" width="3.00" height="28.00" fill="#c6f2bd" stroke="#72ad69" stroke-width="1"/><rect x="1651.50" y="493.50" width="3.00" height="24.00" fill="#c6f2bd" stroke="#72ad69" stroke-width="1"/><rect x="1658.50" y="489.50" width="3.00" height="28.00" fill="#c6f2bd" stroke="#72ad69" stroke-width="1"/><rect x="1665.50" y="501.50" width="3.00" height="16.00" fill="#c6f2bd" stroke="#72ad69" stroke-width="1"/><rect x="1672.50" y="505.50" width="3.00" height="12.00" fill="#c6f2bd" stroke="#72ad69" stroke-width="1"/><rect x="1679.50" y="501.50" width="3.00" height="16.00" fill="#c6f2bd" stroke="#72ad69" stroke-width="1"/><rect x="1685.50" y="509.50" width="3.00" height="8.00" fill="#c6f2bd" stroke="#72ad69" stroke-width="1"/><rect x="1692.50" y="509.50" width="3.00" height="8.00" fill="#c6f2bd" stroke="#72ad69" stroke-width="1"/><rect x="1699.50" y="509.50" width="3.00" height="8.00" fill="#c6f2bd" stroke="#72ad69" stroke-width="1"/><rect x="1706.50" y="509.50" width="3.00" height="8.00" fill="#c6f2bd" stroke="#72ad69" stroke-width="1"/><rect x="1713.50" y="505.50" width="3.00" height="12.00" fill="#c6f2bd" stroke="#72ad69" stroke-width="1"/><rect x="1719.50" y="505.50" width="3.00" height="12.00" fill="#c6f2bd" stroke="#72ad69" stroke-width="1"/><rect x="1726.50" y="505.50" width="3.00" height="12.00" fill="#c6f2bd" stroke="#72ad69" stroke-width="1"/><rect x="1733.50" y="505.50" width="3.00" height="12.00" fill="#c6f2bd" stroke="#72ad69" stroke-width="1"/><rect x="1740.50" y="481.50" width="3.00" height="36.00" fill="#c6f2bd" stroke="#72ad69" stroke-width="1"/><rect x="1747.50" y="481.50" width="3.00" height="36.00" fill="#c6f2bd" stroke="#72ad69" stroke-width="1"/><rect x="1753.50" y="481.50" width="3.00" height="36.00" fill="#c6f2bd" stroke="#72ad69" stroke-width="1"/><rect x="1760.50" y="481.50" width="3.00" height="36.00" fill="#c6f2bd" stroke="#72ad69" stroke-width="1"/><rect x="1767.50" y="489.50" width="3.00" height="28.00" fill="#c6f2bd" stroke="#72ad69" stroke-width="1"/><rect x="1774.50" y="493.50" width="3.00" height="24.00" fill="#c6f2bd" stroke="#72ad69" stroke-width="1"/><rect x="1781.50" y="489.50" width="3.00" height="28.00" fill="#c6f2bd" stroke="#72ad69" stroke-width="1"/><rect x="1787.50" y="489.50" width="3.00" height="28.00" fill="#c6f2bd" stroke="#72ad69" stroke-width="1"/><rect x="1794.50" y="485.50" width="3.00" height="32.00" fill="#c6f2bd" stroke="#72ad69" stroke-width="1"/><rect x="1801.50" y="477.50" width="3.00" height="40.00" fill="#c6f2bd" stroke="#72ad69" stroke-width="1"/><rect x="1808.50" y="468.50" width="3.00" height="49.00" fill="#c6f2bd" stroke="#72ad69" stroke-width="1"/><rect x="1815.50" y="493.50" width="3.00" height="24.00" fill="#c6f2bd" stroke="#72ad69" stroke-width="1"/><rect x="1821.50" y="497.50" width="3.00" height="20.00" fill="#c6f2bd" stroke="#72ad69" stroke-width="1"/><rect x="1828.50" y="481.50" width="3.00" height="36.00" fill="#c6f2bd" stroke="#72ad69" stroke-width="1"/><rect x="1835.50" y="489.50" width="3.00" height="28.00" fill="#c6f2bd" stroke="#72ad69" stroke-width="1"/><rect x="1842.50" y="481.50" width="3.00" height="36.00" fill="#c6f2bd" stroke="#72ad69" stroke-width="1"/><rect x="1849.50" y="472.50" width="3.00" height="45.00" fill="#c6f2bd" stroke="#72ad69" stroke-width="1"/><rect x="1855.50" y="489.50" width="3.00" height="28.00" fill="#c6f2bd" stroke="#72ad69" stroke-width="1"/><rect x="1862.50" y="489.50" width="3.00" height="28.00" fill="#c6f2bd" stroke="#72ad69" stroke-width="1"/><rect x="1869.50" y="497.50" width="3.00" height="20.00" fill="#c6f2bd" stroke="#72ad69" stroke-width="1"/></svg>
<div class="t " style="left:962.50px;top:346.74px;font-size:12px;letter-spacing:0.581px;color:#24292e;"><span style="letter-spacing:0.80px">4</span><span style="letter-spacing:0.80px">0</span> milliseconds</div>
<div class="t " style="left:962.50px;top:387.99px;font-size:12px;letter-spacing:0.581px;color:#24292e;"><span style="letter-spacing:0.80px">3</span><span style="letter-spacing:0.80px">0</span> milliseconds</div>
<div class="t " style="left:962.50px;top:429.24px;font-size:12px;letter-spacing:0.581px;color:#24292e;"><span style="letter-spacing:0.80px">2</span><span style="letter-spacing:0.80px">0</span> milliseconds</div>
<div class="t " style="left:965.21px;top:470.49px;font-size:12px;letter-spacing:0.581px;color:#24292e;"><svg width="4.76" height="8.59" style="margin-right:0.58px"><path fill="currentColor" d="M2.70 0H3.90V8.59H2.70V1.20L0.36 2.70V1.56Z"/></svg><span style="letter-spacing:0.80px">0</span> milliseconds</div>
<div class="t " style="left:969.98px;top:511.74px;font-size:12px;letter-spacing:0.581px;color:#24292e;"><span style="letter-spacing:0.80px">0</span> milliseconds</div>
<div class="t " style="left:1079.55px;top:526.04px;font-size:12px;letter-spacing:0.367px;color:#24292e;"><svg width="4.76" height="8.59" style="margin-right:0.37px"><path fill="currentColor" d="M2.70 0H3.90V8.59H2.70V1.20L0.36 2.70V1.56Z"/></svg><span style="letter-spacing:0.80px">0</span>:<span style="letter-spacing:0.80px">5</span><span style="letter-spacing:0.80px">0</span></div>
<div class="t " style="left:1148.91px;top:526.04px;font-size:12px;letter-spacing:0.367px;color:#24292e;"><svg width="4.76" height="8.59" style="margin-right:0.37px"><path fill="currentColor" d="M2.70 0H3.90V8.59H2.70V1.20L0.36 2.70V1.56Z"/></svg><svg width="4.76" height="8.59" style="margin-right:0.37px"><path fill="currentColor" d="M2.70 0H3.90V8.59H2.70V1.20L0.36 2.70V1.56Z"/></svg>:<span style="letter-spacing:0.80px">0</span><span style="letter-spacing:0.80px">0</span></div>
<div class="t " style="left:1218.27px;top:526.04px;font-size:12px;letter-spacing:0.367px;color:#24292e;"><svg width="4.76" height="8.59" style="margin-right:0.37px"><path fill="currentColor" d="M2.70 0H3.90V8.59H2.70V1.20L0.36 2.70V1.56Z"/></svg><svg width="4.76" height="8.59" style="margin-right:0.37px"><path fill="currentColor" d="M2.70 0H3.90V8.59H2.70V1.20L0.36 2.70V1.56Z"/></svg>:<svg width="4.76" height="8.59" style="margin-right:0.37px"><path fill="currentColor" d="M2.70 0H3.90V8.59H2.70V1.20L0.36 2.70V1.56Z"/></svg><span style="letter-spacing:0.80px">0</span></div>
<div class="t " style="left:1284.91px;top:526.04px;font-size:12px;letter-spacing:0.367px;color:#24292e;"><svg width="4.76" height="8.59" style="margin-right:0.37px"><path fill="currentColor" d="M2.70 0H3.90V8.59H2.70V1.20L0.36 2.70V1.56Z"/></svg><svg width="4.76" height="8.59" style="margin-right:0.37px"><path fill="currentColor" d="M2.70 0H3.90V8.59H2.70V1.20L0.36 2.70V1.56Z"/></svg>:<span style="letter-spacing:0.80px">2</span><span style="letter-spacing:0.80px">0</span></div>
<div class="t " style="left:1352.91px;top:526.04px;font-size:12px;letter-spacing:0.367px;color:#24292e;"><svg width="4.76" height="8.59" style="margin-right:0.37px"><path fill="currentColor" d="M2.70 0H3.90V8.59H2.70V1.20L0.36 2.70V1.56Z"/></svg><svg width="4.76" height="8.59" style="margin-right:0.37px"><path fill="currentColor" d="M2.70 0H3.90V8.59H2.70V1.20L0.36 2.70V1.56Z"/></svg>:<span style="letter-spacing:0.80px">3</span><span style="letter-spacing:0.80px">0</span></div>
<div class="t " style="left:1420.91px;top:526.04px;font-size:12px;letter-spacing:0.367px;color:#24292e;"><svg width="4.76" height="8.59" style="margin-right:0.37px"><path fill="currentColor" d="M2.70 0H3.90V8.59H2.70V1.20L0.36 2.70V1.56Z"/></svg><svg width="4.76" height="8.59" style="margin-right:0.37px"><path fill="currentColor" d="M2.70 0H3.90V8.59H2.70V1.20L0.36 2.70V1.56Z"/></svg>:<span style="letter-spacing:0.80px">4</span><span style="letter-spacing:0.80px">0</span></div>
<div class="t " style="left:1488.91px;top:526.04px;font-size:12px;letter-spacing:0.367px;color:#24292e;"><svg width="4.76" height="8.59" style="margin-right:0.37px"><path fill="currentColor" d="M2.70 0H3.90V8.59H2.70V1.20L0.36 2.70V1.56Z"/></svg><svg width="4.76" height="8.59" style="margin-right:0.37px"><path fill="currentColor" d="M2.70 0H3.90V8.59H2.70V1.20L0.36 2.70V1.56Z"/></svg>:<span style="letter-spacing:0.80px">5</span><span style="letter-spacing:0.80px">0</span></div>
<div class="t " style="left:1555.55px;top:526.04px;font-size:12px;letter-spacing:0.367px;color:#24292e;"><svg width="4.76" height="8.59" style="margin-right:0.37px"><path fill="currentColor" d="M2.70 0H3.90V8.59H2.70V1.20L0.36 2.70V1.56Z"/></svg><span style="letter-spacing:0.80px">2</span>:<span style="letter-spacing:0.80px">0</span><span style="letter-spacing:0.80px">0</span></div>
<div class="t " style="left:1624.91px;top:526.04px;font-size:12px;letter-spacing:0.367px;color:#24292e;"><svg width="4.76" height="8.59" style="margin-right:0.37px"><path fill="currentColor" d="M2.70 0H3.90V8.59H2.70V1.20L0.36 2.70V1.56Z"/></svg><span style="letter-spacing:0.80px">2</span>:<svg width="4.76" height="8.59" style="margin-right:0.37px"><path fill="currentColor" d="M2.70 0H3.90V8.59H2.70V1.20L0.36 2.70V1.56Z"/></svg><span style="letter-spacing:0.80px">0</span></div>
<div class="t " style="left:1691.55px;top:526.04px;font-size:12px;letter-spacing:0.367px;color:#24292e;"><svg width="4.76" height="8.59" style="margin-right:0.37px"><path fill="currentColor" d="M2.70 0H3.90V8.59H2.70V1.20L0.36 2.70V1.56Z"/></svg><span style="letter-spacing:0.80px">2</span>:<span style="letter-spacing:0.80px">2</span><span style="letter-spacing:0.80px">0</span></div>
<div class="t " style="left:1759.55px;top:526.04px;font-size:12px;letter-spacing:0.367px;color:#24292e;"><svg width="4.76" height="8.59" style="margin-right:0.37px"><path fill="currentColor" d="M2.70 0H3.90V8.59H2.70V1.20L0.36 2.70V1.56Z"/></svg><span style="letter-spacing:0.80px">2</span>:<span style="letter-spacing:0.80px">3</span><span style="letter-spacing:0.80px">0</span></div>
<div class="t " style="left:1827.55px;top:526.04px;font-size:12px;letter-spacing:0.367px;color:#24292e;"><svg width="4.76" height="8.59" style="margin-right:0.37px"><path fill="currentColor" d="M2.70 0H3.90V8.59H2.70V1.20L0.36 2.70V1.56Z"/></svg><span style="letter-spacing:0.80px">2</span>:<span style="letter-spacing:0.80px">4</span><span style="letter-spacing:0.80px">0</span></div>
<div style="position:absolute;left:964px;top:555px;width:14px;height:4px;background:#56a64b;border-radius:2px;"></div>
<div class="t r" style="left:986.70px;top:551.34px;font-size:12px;letter-spacing:0.646px;color:#24292e;">execution<span style="letter-spacing:-0.89px">_</span>duration<span style="letter-spacing:-0.89px">_</span>max</div>
<div style="position:absolute;left:951px;top:588px;width:940px;height:401px;background:#fff;border:1px solid #e7e8e9;border-radius:2px;box-sizing:border-box;"></div>
<div class="t m" style="left:959.30px;top:598.15px;font-size:14px;letter-spacing:0.739px;color:#24292e;">Series fetched</div>
<svg style="position:absolute;left:0;top:0" width="1905" height="882"><line x1="1005" y1="637.5" x2="1873" y2="637.5" stroke="#f5f5f6" stroke-width="1"/><line x1="1005" y1="667.5" x2="1873" y2="667.5" stroke="#f5f5f6" stroke-width="1"/><line x1="1005" y1="698.5" x2="1873" y2="698.5" stroke="#f5f5f6" stroke-width="1"/><line x1="1005" y1="729.5" x2="1873" y2="729.5" stroke="#f5f5f6" stroke-width="1"/><line x1="1005" y1="760.5" x2="1873" y2="760.5" stroke="#f5f5f6" stroke-width="1"/><line x1="1005" y1="791.5" x2="1873" y2="791.5" stroke="#f5f5f6" stroke-width="1"/><line x1="1005" y1="821.5" x2="1873" y2="821.5" stroke="#f5f5f6" stroke-width="1"/><line x1="1045.5" y1="631" x2="1045.5" y2="824" stroke="#f5f5f6" stroke-width="1"/><line x1="1117.5" y1="631" x2="1117.5" y2="824" stroke="#f5f5f6" stroke-width="1"/><line x1="1190.5" y1="631" x2="1190.5" y2="824" stroke="#f5f5f6" stroke-width="1"/><line x1="1262.5" y1="631" x2="1262.5" y2="824" stroke="#f5f5f6" stroke-width="1"/><line x1="1334.5" y1="631" x2="1334.5" y2="824" stroke="#f5f5f6" stroke-width="1"/><line x1="1407.5" y1="631" x2="1407.5" y2="824" stroke="#f5f5f6" stroke-width="1"/><line x1="1479.5" y1="631" x2="1479.5" y2="824" stroke="#f5f5f6" stroke-width="1"/><line x1="1551.5" y1="631" x2="1551.5" y2="824" stroke="#f5f5f6" stroke-width="1"/><line x1="1624.5" y1="631" x2="1624.5" y2="824" stroke="#f5f5f6" stroke-width="1"/><line x1="1696.5" y1="631" x2="1696.5" y2="824" stroke="#f5f5f6" stroke-width="1"/><line x1="1769.5" y1="631" x2="1769.5" y2="824" stroke="#f5f5f6" stroke-width="1"/><line x1="1841.5" y1="631" x2="1841.5" y2="824" stroke="#f5f5f6" stroke-width="1"/><rect x="1108.36" y="820.00" width="4.00" height="1.50" fill="#d9d9d9" stroke="none" stroke-width="1"/><rect x="1115.85" y="818.50" width="3.50" height="3.00" fill="#c6f2bd" stroke="#72ad69" stroke-width="1"/><rect x="1123.09" y="810.50" width="3.50" height="11.00" fill="#c6f2bd" stroke="#72ad69" stroke-width="1"/><rect x="1130.32" y="810.50" width="3.50" height="11.00" fill="#c6f2bd" stroke="#72ad69" stroke-width="1"/><rect x="1137.56" y="810.50" width="3.50" height="11.00" fill="#c6f2bd" stroke="#72ad69" stroke-width="1"/><rect x="1144.80" y="810.50" width="3.50" height="11.00" fill="#c6f2bd" stroke="#72ad69" stroke-width="1"/><rect x="1152.03" y="810.50" width="3.50" height="11.00" fill="#c6f2bd" stroke="#72ad69" stroke-width="1"/><rect x="1159.27" y="810.50" width="3.50" height="11.00" fill="#c6f2bd" stroke="#72ad69" stroke-width="1"/><rect x="1166.51" y="810.50" width="3.50" height="11.00" fill="#c6f2bd" stroke="#72ad69" stroke-width="1"/><rect x="1173.75" y="810.50" width="3.50" height="11.00" fill="#c6f2bd" stroke="#72ad69" stroke-width="1"/><rect x="1180.98" y="810.50" width="3.50" height="11.00" fill="#c6f2bd" stroke="#72ad69" stroke-width="1"/><rect x="1188.22" y="810.50" width="3.50" height="11.00" fill="#c6f2bd" stroke="#72ad69" stroke-width="1"/><rect x="1195.46" y="810.50" width="3.50" height="11.00" fill="#c6f2bd" stroke="#72ad69" stroke-width="1"/><rect x="1202.69" y="810.50" width="3.50" height="11.00" fill="#c6f2bd" stroke="#72ad69" stroke-width="1"/><rect x="1209.93" y="661.50" width="3.50" height="160.00" fill="#c6f2bd" stroke="#72ad69" stroke-width="1"/><rect x="1217.17" y="810.50" width="3.50" height="11.00" fill="#c6f2bd" stroke="#72ad69" stroke-width="1"/><rect x="1224.40" y="810.50" width="3.50" height="11.00" fill="#c6f2bd" stroke="#72ad69" stroke-width="1"/><rect x="1231.64" y="810.50" width="3.50" height="11.00" fill="#c6f2bd" stroke="#72ad69" stroke-width="1"/><rect x="1238.88" y="810.50" width="3.50" height="11.00" fill="#c6f2bd" stroke="#72ad69" stroke-width="1"/><rect x="1246.12" y="810.50" width="3.50" height="11.00" fill="#c6f2bd" stroke="#72ad69" stroke-width="1"/><rect x="1253.35" y="810.50" width="3.50" height="11.00" fill="#c6f2bd" stroke="#72ad69" stroke-width="1"/><rect x="1260.59" y="810.50" width="3.50" height="11.00" fill="#c6f2bd" stroke="#72ad69" stroke-width="1"/><rect x="1267.83" y="810.50" width="3.50" height="11.00" fill="#c6f2bd" stroke="#72ad69" stroke-width="1"/><rect x="1275.06" y="810.50" width="3.50" height="11.00" fill="#c6f2bd" stroke="#72ad69" stroke-width="1"/><rect x="1282.30" y="810.50" width="3.50" height="11.00" fill="#c6f2bd" stroke="#72ad69" stroke-width="1"/><rect x="1289.54" y="658.50" width="3.50" height="163.00" fill="#c6f2bd" stroke="#72ad69" stroke-width="1"/><rect x="1296.77" y="810.50" width="3.50" height="11.00" fill="#c6f2bd" stroke="#72ad69" stroke-width="1"/><rect x="1304.01" y="810.50" width="3.50" height="11.00" fill="#c6f2bd" stroke="#72ad69" stroke-width="1"/><rect x="1311.25" y="810.50" width="3.50" height="11.00" fill="#c6f2bd" stroke="#72ad69" stroke-width="1"/><rect x="1318.49" y="810.50" width="3.50" height="11.00" fill="#c6f2bd" stroke="#72ad69" stroke-width="1"/><rect x="1325.72" y="810.50" width="3.50" height="11.00" fill="#c6f2bd" stroke="#72ad69" stroke-width="1"/><rect x="1332.96" y="810.50" width="3.50" height="11.00" fill="#c6f2bd" stroke="#72ad69" stroke-width="1"/><rect x="1340.20" y="810.50" width="3.50" height="11.00" fill="#c6f2bd" stroke="#72ad69" stroke-width="1"/><rect x="1347.43" y="810.50" width="3.50" height="11.00" fill="#c6f2bd" stroke="#72ad69" stroke-width="1"/><rect x="1354.67" y="810.50" width="3.50" height="11.00" fill="#c6f2bd" stroke="#72ad69" stroke-width="1"/><rect x="1361.91" y="810.50" width="3.50" height="11.00" fill="#c6f2bd" stroke="#72ad69" stroke-width="1"/><rect x="1369.14" y="810.50" width="3.50" height="11.00" fill="#c6f2bd" stroke="#72ad69" stroke-width="1"/><rect x="1376.38" y="810.50" width="3.50" height="11.00" fill="#c6f2bd" stroke="#72ad69" stroke-width="1"/><rect x="1383.62" y="810.50" width="3.50" height="11.00" fill="#c6f2bd" stroke="#72ad69" stroke-width="1"/><rect x="1390.86" y="810.50" width="3.50" height="11.00" fill="#c6f2bd" stroke="#72ad69" stroke-width="1"/><rect x="1398.09" y="810.50" width="3.50" height="11.00" fill="#c6f2bd" stroke="#72ad69" stroke-width="1"/><rect x="1405.33" y="810.50" width="3.50" height="11.00" fill="#c6f2bd" stroke="#72ad69" stroke-width="1"/><rect x="1412.57" y="810.50" width="3.50" height="11.00" fill="#c6f2bd" stroke="#72ad69" stroke-width="1"/><rect x="1419.80" y="810.50" width="3.50" height="11.00" fill="#c6f2bd" stroke="#72ad69" stroke-width="1"/><rect x="1427.04" y="810.50" width="3.50" height="11.00" fill="#c6f2bd" stroke="#72ad69" stroke-width="1"/><rect x="1434.28" y="810.50" width="3.50" height="11.00" fill="#c6f2bd" stroke="#72ad69" stroke-width="1"/><rect x="1441.51" y="810.50" width="3.50" height="11.00" fill="#c6f2bd" stroke="#72ad69" stroke-width="1"/><rect x="1448.75" y="810.50" width="3.50" height="11.00" fill="#c6f2bd" stroke="#72ad69" stroke-width="1"/><rect x="1455.99" y="810.50" width="3.50" height="11.00" fill="#c6f2bd" stroke="#72ad69" stroke-width="1"/><rect x="1463.23" y="810.50" width="3.50" height="11.00" fill="#c6f2bd" stroke="#72ad69" stroke-width="1"/><rect x="1470.46" y="810.50" width="3.50" height="11.00" fill="#c6f2bd" stroke="#72ad69" stroke-width="1"/><rect x="1477.70" y="810.50" width="3.50" height="11.00" fill="#c6f2bd" stroke="#72ad69" stroke-width="1"/><rect x="1484.94" y="810.50" width="3.50" height="11.00" fill="#c6f2bd" stroke="#72ad69" stroke-width="1"/><rect x="1492.17" y="810.50" width="3.50" height="11.00" fill="#c6f2bd" stroke="#72ad69" stroke-width="1"/><rect x="1499.41" y="810.50" width="3.50" height="11.00" fill="#c6f2bd" stroke="#72ad69" stroke-width="1"/><rect x="1506.65" y="810.50" width="3.50" height="11.00" fill="#c6f2bd" stroke="#72ad69" stroke-width="1"/><rect x="1513.88" y="810.50" width="3.50" height="11.00" fill="#c6f2bd" stroke="#72ad69" stroke-width="1"/><rect x="1521.12" y="810.50" width="3.50" height="11.00" fill="#c6f2bd" stroke="#72ad69" stroke-width="1"/><rect x="1528.36" y="810.50" width="3.50" height="11.00" fill="#c6f2bd" stroke="#72ad69" stroke-width="1"/><rect x="1535.60" y="810.50" width="3.50" height="11.00" fill="#c6f2bd" stroke="#72ad69" stroke-width="1"/><rect x="1542.83" y="810.50" width="3.50" height="11.00" fill="#c6f2bd" stroke="#72ad69" stroke-width="1"/><rect x="1550.07" y="810.50" width="3.50" height="11.00" fill="#c6f2bd" stroke="#72ad69" stroke-width="1"/><rect x="1557.31" y="810.50" width="3.50" height="11.00" fill="#c6f2bd" stroke="#72ad69" stroke-width="1"/><rect x="1564.54" y="810.50" width="3.50" height="11.00" fill="#c6f2bd" stroke="#72ad69" stroke-width="1"/><rect x="1571.78" y="810.50" width="3.50" height="11.00" fill="#c6f2bd" stroke="#72ad69" stroke-width="1"/><rect x="1579.02" y="810.50" width="3.50" height="11.00" fill="#c6f2bd" stroke="#72ad69" stroke-width="1"/><rect x="1586.25" y="810.50" width="3.50" height="11.00" fill="#c6f2bd" stroke="#72ad69" stroke-width="1"/><rect x="1593.49" y="810.50" width="3.50" height="11.00" fill="#c6f2bd" stroke="#72ad69" stroke-width="1"/><rect x="1600.73" y="810.50" width="3.50" height="11.00" fill="#c6f2bd" stroke="#72ad69" stroke-width="1"/><rect x="1607.97" y="810.50" width="3.50" height="11.00" fill="#c6f2bd" stroke="#72ad69" stroke-width="1"/><rect x="1615.20" y="810.50" width="3.50" height="11.00" fill="#c6f2bd" stroke="#72ad69" stroke-width="1"/><rect x="1622.44" y="810.50" width="3.50" height="11.00" fill="#c6f2bd" stroke="#72ad69" stroke-width="1"/><rect x="1629.68" y="810.50" width="3.50" height="11.00" fill="#c6f2bd" stroke="#72ad69" stroke-width="1"/><rect x="1636.91" y="810.50" width="3.50" height="11.00" fill="#c6f2bd" stroke="#72ad69" stroke-width="1"/><rect x="1644.15" y="810.50" width="3.50" height="11.00" fill="#c6f2bd" stroke="#72ad69" stroke-width="1"/><rect x="1651.39" y="810.50" width="3.50" height="11.00" fill="#c6f2bd" stroke="#72ad69" stroke-width="1"/><rect x="1658.62" y="810.50" width="3.50" height="11.00" fill="#c6f2bd" stroke="#72ad69" stroke-width="1"/><rect x="1665.86" y="810.50" width="3.50" height="11.00" fill="#c6f2bd" stroke="#72ad69" stroke-width="1"/><rect x="1673.10" y="810.50" width="3.50" height="11.00" fill="#c6f2bd" stroke="#72ad69" stroke-width="1"/><rect x="1680.34" y="810.50" width="3.50" height="11.00" fill="#c6f2bd" stroke="#72ad69" stroke-width="1"/><rect x="1687.57" y="810.50" width="3.50" height="11.00" fill="#c6f2bd" stroke="#72ad69" stroke-width="1"/><rect x="1694.81" y="810.50" width="3.50" height="11.00" fill="#c6f2bd" stroke="#72ad69" stroke-width="1"/><rect x="1702.05" y="810.50" width="3.50" height="11.00" fill="#c6f2bd" stroke="#72ad69" stroke-width="1"/><rect x="1709.28" y="810.50" width="3.50" height="11.00" fill="#c6f2bd" stroke="#72ad69" stroke-width="1"/><rect x="1716.52" y="810.50" width="3.50" height="11.00" fill="#c6f2bd" stroke="#72ad69" stroke-width="1"/><rect x="1723.76" y="810.50" width="3.50" height="11.00" fill="#c6f2bd" stroke="#72ad69" stroke-width="1"/><rect x="1730.99" y="810.50" width="3.50" height="11.00" fill="#c6f2bd" stroke="#72ad69" stroke-width="1"/><rect x="1738.23" y="810.50" width="3.50" height="11.00" fill="#c6f2bd" stroke="#72ad69" stroke-width="1"/><rect x="1745.47" y="810.50" width="3.50" height="11.00" fill="#c6f2bd" stroke="#72ad69" stroke-width="1"/><rect x="1752.71" y="810.50" width="3.50" height="11.00" fill="#c6f2bd" stroke="#72ad69" stroke-width="1"/><rect x="1759.94" y="810.50" width="3.50" height="11.00" fill="#c6f2bd" stroke="#72ad69" stroke-width="1"/><rect x="1767.18" y="810.50" width="3.50" height="11.00" fill="#c6f2bd" stroke="#72ad69" stroke-width="1"/><rect x="1774.42" y="810.50" width="3.50" height="11.00" fill="#c6f2bd" stroke="#72ad69" stroke-width="1"/><rect x="1781.65" y="810.50" width="3.50" height="11.00" fill="#c6f2bd" stroke="#72ad69" stroke-width="1"/><rect x="1788.89" y="810.50" width="3.50" height="11.00" fill="#c6f2bd" stroke="#72ad69" stroke-width="1"/><rect x="1796.13" y="810.50" width="3.50" height="11.00" fill="#c6f2bd" stroke="#72ad69" stroke-width="1"/><rect x="1803.36" y="810.50" width="3.50" height="11.00" fill="#c6f2bd" stroke="#72ad69" stroke-width="1"/><rect x="1810.60" y="810.50" width="3.50" height="11.00" fill="#c6f2bd" stroke="#72ad69" stroke-width="1"/><rect x="1817.84" y="810.50" width="3.50" height="11.00" fill="#c6f2bd" stroke="#72ad69" stroke-width="1"/><rect x="1825.08" y="810.50" width="3.50" height="11.00" fill="#c6f2bd" stroke="#72ad69" stroke-width="1"/><rect x="1832.31" y="810.50" width="3.50" height="11.00" fill="#c6f2bd" stroke="#72ad69" stroke-width="1"/><rect x="1839.55" y="810.50" width="3.50" height="11.00" fill="#c6f2bd" stroke="#72ad69" stroke-width="1"/><rect x="1846.79" y="810.50" width="3.50" height="11.00" fill="#c6f2bd" stroke="#72ad69" stroke-width="1"/><rect x="1854.02" y="810.50" width="3.50" height="11.00" fill="#c6f2bd" stroke="#72ad69" stroke-width="1"/><rect x="1861.26" y="810.50" width="3.50" height="11.00" fill="#c6f2bd" stroke="#72ad69" stroke-width="1"/><rect x="1868.25" y="819.50" width="4.00" height="2.00" fill="#72ad69" stroke="none" stroke-width="1"/></svg>
<div class="t " style="left:965.63px;top:630.34px;font-size:12px;letter-spacing:0.000px;color:#24292e;"><svg width="4.76" height="8.59" style="margin-right:0.00px"><path fill="currentColor" d="M2.70 0H3.90V8.59H2.70V1.20L0.36 2.70V1.56Z"/></svg><span style="letter-spacing:0.80px">2</span><span style="letter-spacing:0.80px">0</span><span style="letter-spacing:0.80px">0</span><span style="letter-spacing:0.80px">0</span></div>
<div class="t " style="left:965.63px;top:661.14px;font-size:12px;letter-spacing:0.000px;color:#24292e;"><svg width="4.76" height="8.59" style="margin-right:0.00px"><path fill="currentColor" d="M2.70 0H3.90V8.59H2.70V1.20L0.36 2.70V1.56Z"/></svg><span style="letter-spacing:0.80px">0</span><span style="letter-spacing:0.80px">0</span><span style="letter-spacing:0.80px">0</span><span style="letter-spacing:0.80px">0</span></div>
<div class="t " style="left:970.40px;top:691.94px;font-size:12px;letter-spacing:0.000px;color:#24292e;"><span style="letter-spacing:0.80px">8</span><span style="letter-spacing:0.80px">0</span><span style="letter-spacing:0.80px">0</span><span style="letter-spacing:0.80px">0</span></div>
<div class="t " style="left:970.40px;top:722.74px;font-size:12px;letter-spacing:0.000px;color:#24292e;"><span style="letter-spacing:0.80px">6</span><span style="letter-spacing:0.80px">0</span><span style="letter-spacing:0.80px">0</span><span style="letter-spacing:0.80px">0</span></div>
<div class="t " style="left:970.40px;top:753.54px;font-size:12px;letter-spacing:0.000px;color:#24292e;"><span style="letter-spacing:0.80px">4</span><span style="letter-spacing:0.80px">0</span><span style="letter-spacing:0.80px">0</span><span style="letter-spacing:0.80px">0</span></div>
<div class="t " style="left:970.40px;top:784.34px;font-size:12px;letter-spacing:0.000px;color:#24292e;"><span style="letter-spacing:0.80px">2</span><span style="letter-spacing:0.80px">0</span><span style="letter-spacing:0.80px">0</span><span style="letter-spacing:0.80px">0</span></div>
<div class="t " style="left:992.82px;top:815.14px;font-size:12px;letter-spacing:0.000px;color:#24292e;"><span style="letter-spacing:0.80px">0</span></div>
<div class="t " style="left:1029.85px;top:829.54px;font-size:12px;letter-spacing:0.367px;color:#24292e;"><svg width="4.76" height="8.59" style="margin-right:0.37px"><path fill="currentColor" d="M2.70 0H3.90V8.59H2.70V1.20L0.36 2.70V1.56Z"/></svg><span style="letter-spacing:0.80px">0</span>:<span style="letter-spacing:0.80px">5</span><span style="letter-spacing:0.80px">0</span></div>
<div class="t " style="left:1103.58px;top:829.54px;font-size:12px;letter-spacing:0.367px;color:#24292e;"><svg width="4.76" height="8.59" style="margin-right:0.37px"><path fill="currentColor" d="M2.70 0H3.90V8.59H2.70V1.20L0.36 2.70V1.56Z"/></svg><svg width="4.76" height="8.59" style="margin-right:0.37px"><path fill="currentColor" d="M2.70 0H3.90V8.59H2.70V1.20L0.36 2.70V1.56Z"/></svg>:<span style="letter-spacing:0.80px">0</span><span style="letter-spacing:0.80px">0</span></div>
<div class="t " style="left:1177.31px;top:829.54px;font-size:12px;letter-spacing:0.367px;color:#24292e;"><svg width="4.76" height="8.59" style="margin-right:0.37px"><path fill="currentColor" d="M2.70 0H3.90V8.59H2.70V1.20L0.36 2.70V1.56Z"/></svg><svg width="4.76" height="8.59" style="margin-right:0.37px"><path fill="currentColor" d="M2.70 0H3.90V8.59H2.70V1.20L0.36 2.70V1.56Z"/></svg>:<svg width="4.76" height="8.59" style="margin-right:0.37px"><path fill="currentColor" d="M2.70 0H3.90V8.59H2.70V1.20L0.36 2.70V1.56Z"/></svg><span style="letter-spacing:0.80px">0</span></div>
<div class="t " style="left:1248.32px;top:829.54px;font-size:12px;letter-spacing:0.367px;color:#24292e;"><svg width="4.76" height="8.59" style="margin-right:0.37px"><path fill="currentColor" d="M2.70 0H3.90V8.59H2.70V1.20L0.36 2.70V1.56Z"/></svg><svg width="4.76" height="8.59" style="margin-right:0.37px"><path fill="currentColor" d="M2.70 0H3.90V8.59H2.70V1.20L0.36 2.70V1.56Z"/></svg>:<span style="letter-spacing:0.80px">2</span><span style="letter-spacing:0.80px">0</span></div>
<div class="t " style="left:1320.69px;top:829.54px;font-size:12px;letter-spacing:0.367px;color:#24292e;"><svg width="4.76" height="8.59" style="margin-right:0.37px"><path fill="currentColor" d="M2.70 0H3.90V8.59H2.70V1.20L0.36 2.70V1.56Z"/></svg><svg width="4.76" height="8.59" style="margin-right:0.37px"><path fill="currentColor" d="M2.70 0H3.90V8.59H2.70V1.20L0.36 2.70V1.56Z"/></svg>:<span style="letter-spacing:0.80px">3</span><span style="letter-spacing:0.80px">0</span></div>
<div class="t " style="left:1393.06px;top:829.54px;font-size:12px;letter-spacing:0.367px;color:#24292e;"><svg width="4.76" height="8.59" style="margin-right:0.37px"><path fill="currentColor" d="M2.70 0H3.90V8.59H2.70V1.20L0.36 2.70V1.56Z"/></svg><svg width="4.76" height="8.59" style="margin-right:0.37px"><path fill="currentColor" d="M2.70 0H3.90V8.59H2.70V1.20L0.36 2.70V1.56Z"/></svg>:<span style="letter-spacing:0.80px">4</span><span style="letter-spacing:0.80px">0</span></div>
<div class="t " style="left:1465.43px;top:829.54px;font-size:12px;letter-spacing:0.367px;color:#24292e;"><svg width="4.76" height="8.59" style="margin-right:0.37px"><path fill="currentColor" d="M2.70 0H3.90V8.59H2.70V1.20L0.36 2.70V1.56Z"/></svg><svg width="4.76" height="8.59" style="margin-right:0.37px"><path fill="currentColor" d="M2.70 0H3.90V8.59H2.70V1.20L0.36 2.70V1.56Z"/></svg>:<span style="letter-spacing:0.80px">5</span><span style="letter-spacing:0.80px">0</span></div>
<div class="t " style="left:1536.44px;top:829.54px;font-size:12px;letter-spacing:0.367px;color:#24292e;"><svg width="4.76" height="8.59" style="margin-right:0.37px"><path fill="currentColor" d="M2.70 0H3.90V8.59H2.70V1.20L0.36 2.70V1.56Z"/></svg><span style="letter-spacing:0.80px">2</span>:<span style="letter-spacing:0.80px">0</span><span style="letter-spacing:0.80px">0</span></div>
<div class="t " style="left:1610.17px;top:829.54px;font-size:12px;letter-spacing:0.367px;color:#24292e;"><svg width="4.76" height="8.59" style="margin-right:0.37px"><path fill="currentColor" d="M2.70 0H3.90V8.59H2.70V1.20L0.36 2.70V1.56Z"/></svg><span style="letter-spacing:0.80px">2</span>:<svg width="4.76" height="8.59" style="margin-right:0.37px"><path fill="currentColor" d="M2.70 0H3.90V8.59H2.70V1.20L0.36 2.70V1.56Z"/></svg><span style="letter-spacing:0.80px">0</span></div>
<div class="t " style="left:1681.18px;top:829.54px;font-size:12px;letter-spacing:0.367px;color:#24292e;"><svg width="4.76" height="8.59" style="margin-right:0.37px"><path fill="currentColor" d="M2.70 0H3.90V8.59H2.70V1.20L0.36 2.70V1.56Z"/></svg><span style="letter-spacing:0.80px">2</span>:<span style="letter-spacing:0.80px">2</span><span style="letter-spacing:0.80px">0</span></div>
<div class="t " style="left:1753.55px;top:829.54px;font-size:12px;letter-spacing:0.367px;color:#24292e;"><svg width="4.76" height="8.59" style="margin-right:0.37px"><path fill="currentColor" d="M2.70 0H3.90V8.59H2.70V1.20L0.36 2.70V1.56Z"/></svg><span style="letter-spacing:0.80px">2</span>:<span style="letter-spacing:0.80px">3</span><span style="letter-spacing:0.80px">0</span></div>
<div class="t " style="left:1825.92px;top:829.54px;font-size:12px;letter-spacing:0.367px;color:#24292e;"><svg width="4.76" height="8.59" style="margin-right:0.37px"><path fill="currentColor" d="M2.70 0H3.90V8.59H2.70V1.20L0.36 2.70V1.56Z"/></svg><span style="letter-spacing:0.80px">2</span>:<span style="letter-spacing:0.80px">4</span><span style="letter-spacing:0.80px">0</span></div>
<div style="position:absolute;left:964px;top:859px;width:14px;height:4px;background:#56a64b;border-radius:2px;"></div>
<div class="t r" style="left:986.70px;top:855.34px;font-size:12px;letter-spacing:0.604px;color:#24292e;">series<span style="letter-spacing:-0.89px">_</span>fetched</div>
</body></html>
